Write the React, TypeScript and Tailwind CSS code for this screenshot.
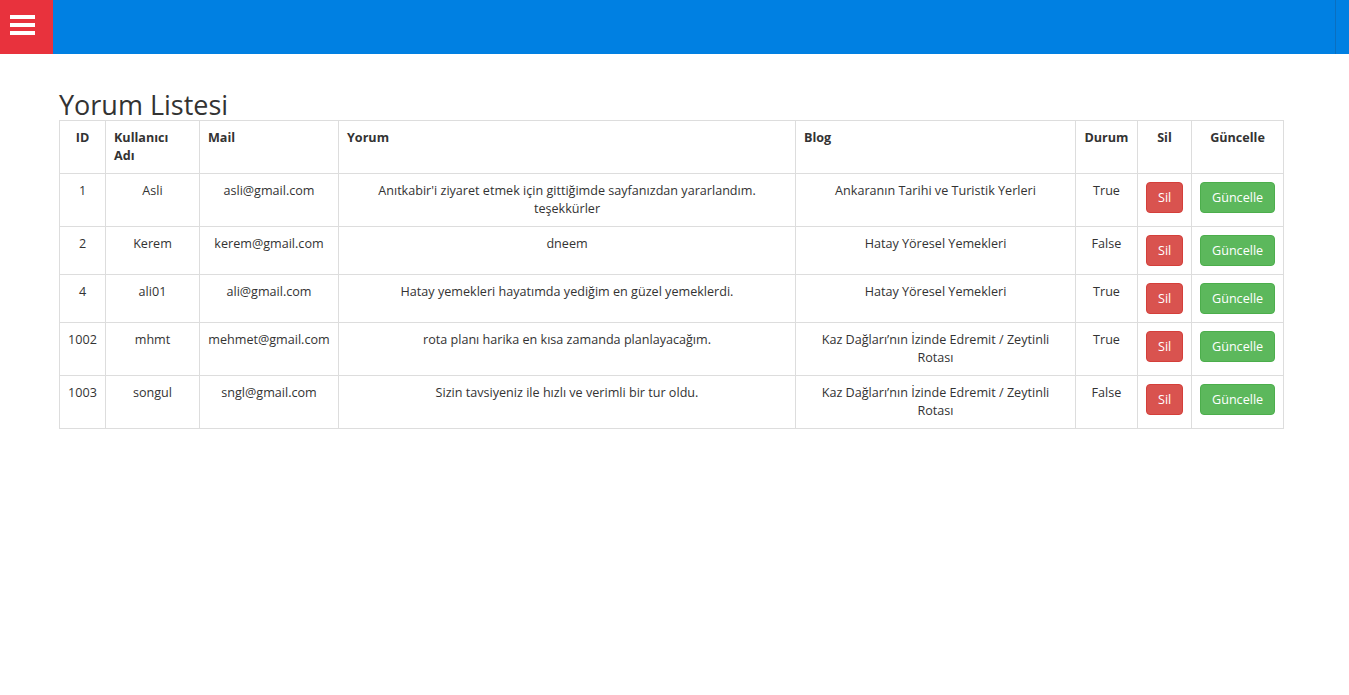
const rows = [
  {
    id: "1",
    user: "Asli",
    mail: "asli@gmail.com",
    comment: "Anıtkabir'i ziyaret etmek için gittiğimde sayfanızdan yararlandım. teşekkürler",
    blog: "Ankaranın Tarihi ve Turistik Yerleri",
    status: "True",
  },
  {
    id: "2",
    user: "Kerem",
    mail: "kerem@gmail.com",
    comment: "dneem",
    blog: "Hatay Yöresel Yemekleri",
    status: "False",
  },
  {
    id: "4",
    user: "ali01",
    mail: "ali@gmail.com",
    comment: "Hatay yemekleri hayatımda yediğim en güzel yemeklerdi.",
    blog: "Hatay Yöresel Yemekleri",
    status: "True",
  },
  {
    id: "1002",
    user: "mhmt",
    mail: "mehmet@gmail.com",
    comment: "rota planı harika en kısa zamanda planlayacağım.",
    blog: "Kaz Dağları’nın İzinde Edremit / Zeytinli Rotası",
    status: "True",
  },
  {
    id: "1003",
    user: "songul",
    mail: "sngl@gmail.com",
    comment: "Sizin tavsiyeniz ile hızlı ve verimli bir tur oldu.",
    blog: "Kaz Dağları’nın İzinde Edremit / Zeytinli Rotası",
    status: "False",
  },
]

const th = "border border-[#ddd] p-2 align-top font-bold"
const td = "border border-[#ddd] p-2 align-top text-center"

export default function App() {
  return (
    <div className="min-h-[695px] bg-white font-['Open_Sans',sans-serif] text-[12.6px] leading-[18px] text-[#333]">
      {/* top bar */}
      <header className="flex h-[54px] bg-[#0080e2]">
        <button className="flex h-[54px] w-[53px] items-start bg-[#e8323d] pt-[15px] pl-[10px]">
          <div className="flex flex-col gap-[4px]">
            <span className="block h-[4px] w-[25px] bg-white" />
            <span className="block h-[4px] w-[25px] bg-white" />
            <span className="block h-[4px] w-[25px] bg-white" />
          </div>
        </button>
        <div className="flex-1" />
        <div className="w-px bg-[#0a6fc0]" />
        <div className="w-[13px]" />
      </header>

      {/* content */}
      <main className="px-[59px] pt-[36px]">
        <h2 className="text-[27px] leading-[30px] font-normal text-[#333]">Yorum Listesi</h2>

        <table className="w-[1224px] table-fixed border-collapse">
          <colgroup>
            <col className="w-[46px]" />
            <col className="w-[94px]" />
            <col className="w-[139px]" />
            <col className="w-[457px]" />
            <col className="w-[280px]" />
            <col className="w-[62px]" />
            <col className="w-[54px]" />
            <col className="w-[92px]" />
          </colgroup>
          <thead>
            <tr>
              <th className={`${th} text-center`}>ID</th>
              <th className={`${th} text-left`}>Kullanıcı Adı</th>
              <th className={`${th} text-left`}>Mail</th>
              <th className={`${th} text-left`}>Yorum</th>
              <th className={`${th} text-left`}>Blog</th>
              <th className={`${th} text-center`}>Durum</th>
              <th className={`${th} text-center`}>Sil</th>
              <th className={`${th} text-center`}>Güncelle</th>
            </tr>
          </thead>
          <tbody>
            {rows.map((r) => (
              <tr key={r.id}>
                <td className={td}>{r.id}</td>
                <td className={td}>{r.user}</td>
                <td className={td}>{r.mail}</td>
                <td className={td}>{r.comment}</td>
                <td className={td}>{r.blog}</td>
                <td className={td}>{r.status}</td>
                <td className={td}>
                  <button className="h-[31px] rounded-[4px] border border-[#d43f3a] bg-[#d9534f] px-[11px] text-white">
                    Sil
                  </button>
                </td>
                <td className={td}>
                  <button className="h-[31px] rounded-[4px] border border-[#4cae4c] bg-[#5cb85c] px-[11px] text-white">
                    Güncelle
                  </button>
                </td>
              </tr>
            ))}
          </tbody>
        </table>
      </main>
    </div>
  )
}
